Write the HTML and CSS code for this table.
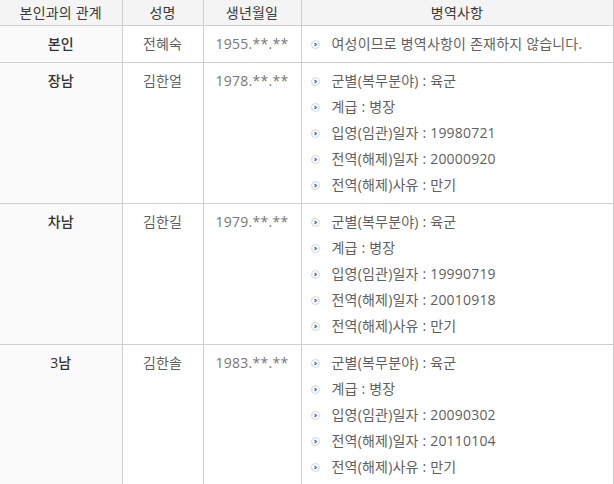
FILE: index.html
```html
<!DOCTYPE html>
<html lang="ko">
<head>
<meta charset="utf-8">
<link rel="stylesheet" href="styles.css">
</head>
<body>
<table class="mil">
  <colgroup>
    <col class="c1"><col class="c2"><col class="c3"><col class="c4">
  </colgroup>
  <thead>
    <tr>
      <th>본인과의 관계</th>
      <th>성명</th>
      <th>생년월일</th>
      <th>병역사항</th>
    </tr>
  </thead>
  <tbody>
    <tr>
      <td class="rel">본인</td>
      <td class="name">전혜숙</td>
      <td class="birth">1955.**.**</td>
      <td class="info">
        <ul>
          <li><svg class="ico" viewBox="0 0 9 9"><circle cx="4.5" cy="4.5" r="4" fill="#fff" stroke="#d4d4d4"/><path d="M3.6 3 L5.4 4.5 L3.6 6" fill="none" stroke="#3d6cb5" stroke-width="1.2"/></svg>여성이므로 병역사항이 존재하지 않습니다.</li>
        </ul>
      </td>
    </tr>
    <tr>
      <td class="rel">장남</td>
      <td class="name">김한얼</td>
      <td class="birth">1978.**.**</td>
      <td class="info">
        <ul>
          <li><svg class="ico" viewBox="0 0 9 9"><circle cx="4.5" cy="4.5" r="4" fill="#fff" stroke="#d4d4d4"/><path d="M3.6 3 L5.4 4.5 L3.6 6" fill="none" stroke="#3d6cb5" stroke-width="1.2"/></svg>군별(복무분야) : 육군</li>
          <li><svg class="ico" viewBox="0 0 9 9"><circle cx="4.5" cy="4.5" r="4" fill="#fff" stroke="#d4d4d4"/><path d="M3.6 3 L5.4 4.5 L3.6 6" fill="none" stroke="#3d6cb5" stroke-width="1.2"/></svg>계급 : 병장</li>
          <li><svg class="ico" viewBox="0 0 9 9"><circle cx="4.5" cy="4.5" r="4" fill="#fff" stroke="#d4d4d4"/><path d="M3.6 3 L5.4 4.5 L3.6 6" fill="none" stroke="#3d6cb5" stroke-width="1.2"/></svg>입영(임관)일자 : 19980721</li>
          <li><svg class="ico" viewBox="0 0 9 9"><circle cx="4.5" cy="4.5" r="4" fill="#fff" stroke="#d4d4d4"/><path d="M3.6 3 L5.4 4.5 L3.6 6" fill="none" stroke="#3d6cb5" stroke-width="1.2"/></svg>전역(해제)일자 : 20000920</li>
          <li><svg class="ico" viewBox="0 0 9 9"><circle cx="4.5" cy="4.5" r="4" fill="#fff" stroke="#d4d4d4"/><path d="M3.6 3 L5.4 4.5 L3.6 6" fill="none" stroke="#3d6cb5" stroke-width="1.2"/></svg>전역(해제)사유 : 만기</li>
        </ul>
      </td>
    </tr>
    <tr>
      <td class="rel">차남</td>
      <td class="name">김한길</td>
      <td class="birth">1979.**.**</td>
      <td class="info">
        <ul>
          <li><svg class="ico" viewBox="0 0 9 9"><circle cx="4.5" cy="4.5" r="4" fill="#fff" stroke="#d4d4d4"/><path d="M3.6 3 L5.4 4.5 L3.6 6" fill="none" stroke="#3d6cb5" stroke-width="1.2"/></svg>군별(복무분야) : 육군</li>
          <li><svg class="ico" viewBox="0 0 9 9"><circle cx="4.5" cy="4.5" r="4" fill="#fff" stroke="#d4d4d4"/><path d="M3.6 3 L5.4 4.5 L3.6 6" fill="none" stroke="#3d6cb5" stroke-width="1.2"/></svg>계급 : 병장</li>
          <li><svg class="ico" viewBox="0 0 9 9"><circle cx="4.5" cy="4.5" r="4" fill="#fff" stroke="#d4d4d4"/><path d="M3.6 3 L5.4 4.5 L3.6 6" fill="none" stroke="#3d6cb5" stroke-width="1.2"/></svg>입영(임관)일자 : 19990719</li>
          <li><svg class="ico" viewBox="0 0 9 9"><circle cx="4.5" cy="4.5" r="4" fill="#fff" stroke="#d4d4d4"/><path d="M3.6 3 L5.4 4.5 L3.6 6" fill="none" stroke="#3d6cb5" stroke-width="1.2"/></svg>전역(해제)일자 : 20010918</li>
          <li><svg class="ico" viewBox="0 0 9 9"><circle cx="4.5" cy="4.5" r="4" fill="#fff" stroke="#d4d4d4"/><path d="M3.6 3 L5.4 4.5 L3.6 6" fill="none" stroke="#3d6cb5" stroke-width="1.2"/></svg>전역(해제)사유 : 만기</li>
        </ul>
      </td>
    </tr>
    <tr>
      <td class="rel">3남</td>
      <td class="name">김한솔</td>
      <td class="birth">1983.**.**</td>
      <td class="info">
        <ul>
          <li><svg class="ico" viewBox="0 0 9 9"><circle cx="4.5" cy="4.5" r="4" fill="#fff" stroke="#d4d4d4"/><path d="M3.6 3 L5.4 4.5 L3.6 6" fill="none" stroke="#3d6cb5" stroke-width="1.2"/></svg>군별(복무분야) : 육군</li>
          <li><svg class="ico" viewBox="0 0 9 9"><circle cx="4.5" cy="4.5" r="4" fill="#fff" stroke="#d4d4d4"/><path d="M3.6 3 L5.4 4.5 L3.6 6" fill="none" stroke="#3d6cb5" stroke-width="1.2"/></svg>계급 : 병장</li>
          <li><svg class="ico" viewBox="0 0 9 9"><circle cx="4.5" cy="4.5" r="4" fill="#fff" stroke="#d4d4d4"/><path d="M3.6 3 L5.4 4.5 L3.6 6" fill="none" stroke="#3d6cb5" stroke-width="1.2"/></svg>입영(임관)일자 : 20090302</li>
          <li><svg class="ico" viewBox="0 0 9 9"><circle cx="4.5" cy="4.5" r="4" fill="#fff" stroke="#d4d4d4"/><path d="M3.6 3 L5.4 4.5 L3.6 6" fill="none" stroke="#3d6cb5" stroke-width="1.2"/></svg>전역(해제)일자 : 20110104</li>
          <li><svg class="ico" viewBox="0 0 9 9"><circle cx="4.5" cy="4.5" r="4" fill="#fff" stroke="#d4d4d4"/><path d="M3.6 3 L5.4 4.5 L3.6 6" fill="none" stroke="#3d6cb5" stroke-width="1.2"/></svg>전역(해제)사유 : 만기</li>
        </ul>
      </td>
    </tr>
  </tbody>
</table>
</body>
</html>
```

FILE: styles.css
```css
html, body {
  margin: 0;
  padding: 0;
  background: #fff;
}

body {
  font-family: "Open Sans", "Noto Sans CJK KR", sans-serif;
  font-size: 14px;
  color: #5f5f5f;
}

.mil {
  border-collapse: collapse;
  table-layout: fixed;
  width: 613px;
}

.c1 { width: 122px; }
.c2 { width: 81px; }
.c3 { width: 98px; }
.c4 { width: 312px; }

.mil th,
.mil td {
  border: 1px solid #cfcfcf;
  padding: 5px 0;
  line-height: 26px;
  vertical-align: top;
  text-align: center;
}

.mil th:first-child,
.mil td:first-child {
  border-left: none;
}

.mil th {
  border-top: none;
  background: #f4f4f4;
  color: #3a3a3a;
  font-weight: 400;
  padding: 0;
  height: 25px;
  line-height: 24px;
  vertical-align: middle;
  letter-spacing: 0.2px;
}

.mil td.rel {
  background: #fafafa;
  color: #333;
  font-weight: 500;
}

.mil td.name {
  color: #5f5f5f;
  letter-spacing: 0.2px;
}

.mil td.birth {
  color: #777;
  letter-spacing: 0.3px;
}

.mil td.info {
  text-align: left;
  padding-left: 9px;
  letter-spacing: 0.2px;
}

.info ul {
  list-style: none;
  margin: 0;
  padding: 0;
}

.info li {
  display: flex;
  align-items: center;
  height: 26px;
}

.ico {
  width: 9px;
  height: 9px;
  flex: none;
  margin-right: 12px;
}
```
